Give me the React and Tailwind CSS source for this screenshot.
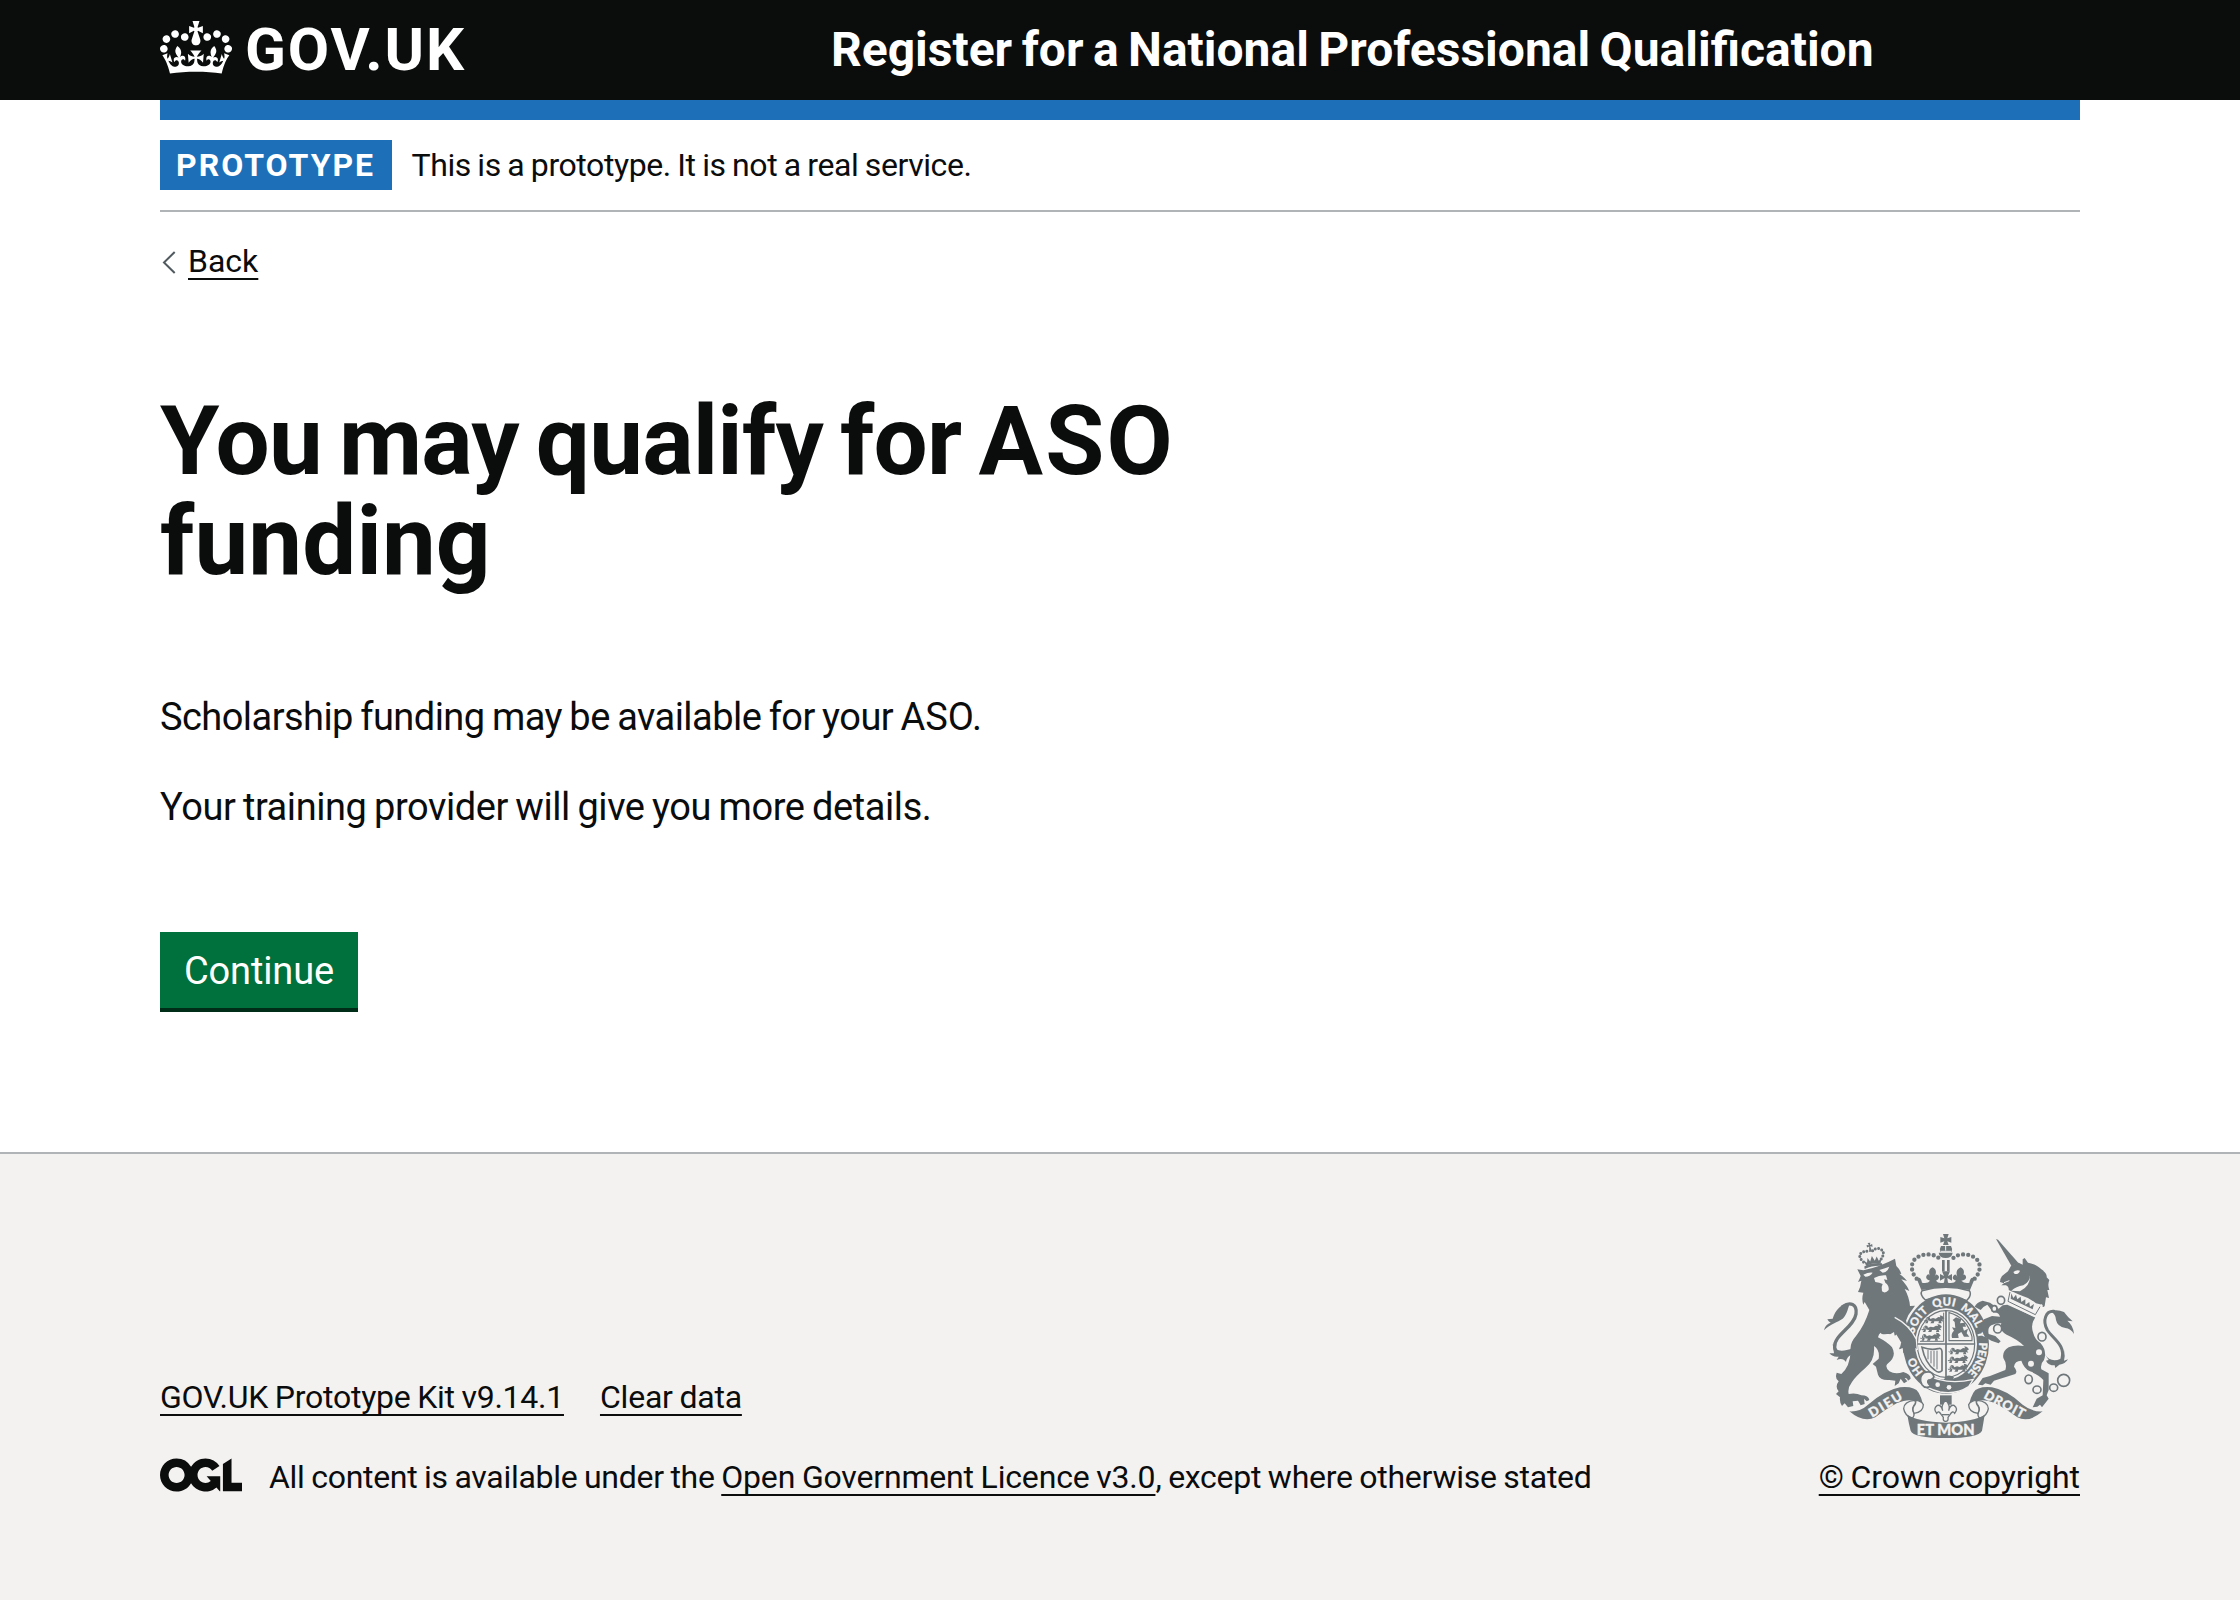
const linkClass =
  "underline decoration-2 underline-offset-[6px] [text-decoration-skip-ink:none]";

function CrownIcon() {
  return (
    <svg viewBox="0 0 132 97" className="mt-px h-[53px] w-[72px] shrink-0" fill="currentColor" aria-hidden="true">
      <path
        fillRule="evenodd"
        d="M25 30.2c3.5 1.5 7.7-.2 9.1-3.7 1.5-3.6-.2-7.8-3.9-9.2-3.6-1.4-7.6.3-9.1 3.9-1.4 3.5.3 7.5 3.9 9zM9 39.5c3.6 1.5 7.8-.2 9.2-3.7 1.5-3.6-.2-7.8-3.9-9.1-3.6-1.5-7.6.2-9.1 3.8-1.4 3.5.3 7.5 3.8 9zM4.4 57.2c3.5 1.5 7.7-.2 9.1-3.8 1.5-3.6-.2-7.7-3.9-9.1-3.5-1.5-7.6.3-9.1 3.8-1.4 3.5.3 7.6 3.9 9.1zm38.3-21.4c3.5 1.5 7.7-.2 9.1-3.8 1.5-3.6-.2-7.7-3.9-9.1-3.6-1.5-7.6.3-9.1 3.8-1.3 3.6.4 7.7 3.9 9.1zm64.4-5.6c-3.6 1.5-7.8-.2-9.1-3.7-1.5-3.6.2-7.8 3.8-9.2 3.6-1.4 7.7.3 9.2 3.9 1.3 3.5-.4 7.5-3.9 9zm15.9 9.3c-3.6 1.5-7.7-.2-9.1-3.7-1.5-3.6.2-7.8 3.7-9.1 3.6-1.5 7.7.2 9.2 3.8 1.5 3.5-.3 7.5-3.8 9zm4.7 17.7c-3.6 1.5-7.8-.2-9.2-3.8-1.5-3.6.2-7.7 3.9-9.1 3.6-1.5 7.7.3 9.2 3.8 1.3 3.5-.4 7.6-3.9 9.1zM89.3 35.8c-3.6 1.5-7.8-.2-9.2-3.8-1.4-3.6.2-7.7 3.9-9.1 3.6-1.5 7.7.3 9.2 3.8 1.4 3.6-.3 7.7-3.9 9.1zM69.7 17.7l8.9 4.7V9.3l-8.9 2.8c-.2-.3-.5-.6-.9-.9L72.4 0H59.6l3.5 11.2c-.3.3-.6.5-.9.9l-8.8-2.8v13.1l8.8-4.7c.3.3.6.7.9.9l-5 15.4v.1c-.2.8-.4 1.6-.4 2.4 0 4.1 3.1 7.5 7 8.1h.2c.3 0 .7.1 1 .1.4 0 .7 0 1-.1h.2c4-.6 7.1-4.1 7.1-8.1 0-.8-.1-1.7-.4-2.4V34l-5.1-15.4c.4-.2.7-.6 1-.9zM66 92.8c16.9 0 32.8 1.1 47.1 3.2 4-16.9 8.9-26.7 14-33.5l-9.6-3.4c1 4.9 1.1 7.2 0 10.2-1.5-1.4-3-4.3-4.2-8.7L108.6 76c2.8-2 5-3.2 7.5-3.3-4.4 9.4-10 11.9-13.6 11.2-4.3-.8-6.3-4.6-5.6-7.9 1-4.7 5.7-5.9 8-.5 4.3-8.7-3-11.4-7.6-8.8 7.1-7.2 7.9-13.5 2.1-21.1-8 6.1-8.1 12.3-4.5 20.8-4.7-5.4-12.1-2.5-9.5 6.2 3.4-5.2 7.9-2 7.2 3.1-.6 4.3-6.4 7.8-13.5 7.2-10.3-.9-10.9-8-11.2-13.8 2.5-.5 7.1 1.8 11 7.3L80.2 60c-4.1 4.4-8 5.3-12.3 5.4 1.4-4.4 8-11.6 8-11.6H55.5s6.4 7.2 7.9 11.6c-4.2-.1-8-1-12.3-5.4l1.4 16.4c3.9-5.5 8.5-7.7 10.9-7.3-.3 5.8-.9 12.8-11.1 13.8-7.2.6-12.9-2.9-13.5-7.2-.7-5 3.8-8.3 7.1-3.1 2.7-8.7-4.6-11.6-9.4-6.2 3.7-8.5 3.6-14.7-4.6-20.8-5.8 7.6-5 13.9 2.2 21.1-4.7-2.6-11.9.1-7.7 8.8 2.3-5.5 7.1-4.2 8.1.5.7 3.3-1.3 7.1-5.7 7.9-3.5.7-9-1.8-13.5-11.2 2.5.1 4.7 1.3 7.5 3.3l-4.7-15.4c-1.2 4.4-2.7 7.2-4.3 8.7-1.1-3-.9-5.3 0-10.2l-9.5 3.4c5 6.9 9.9 16.7 14 33.5 14.8-2.1 30.8-3.2 47.7-3.2z"
      />
    </svg>
  );
}

function OglLogo() {
  return (
    <svg viewBox="0 0 483.2 195.7" className="mt-[10px] h-[34px] w-[82px] shrink-0" fill="currentColor" aria-hidden="true">
      <path d="M421.5 142.8V.1l-50.7 32.3v161.1h112.4v-50.7zm-122.3-9.6A47.12 47.12 0 0 1 221 97.8c0-26 21.1-47.1 47.1-47.1 16.7 0 31.4 8.7 39.7 21.8l42.7-27.2A97.63 97.63 0 0 0 268.1 0c-36.5 0-68.3 20.1-85.1 49.7A98 98 0 0 0 97.8 0C43.9 0 0 43.9 0 97.8s43.9 97.8 97.8 97.8c36.5 0 68.3-20.1 85.1-49.7a97.76 97.76 0 0 0 149.6 25.4l19.4 22.2h3v-87.8h-80l24.3 27.5zM97.8 145c-26 0-47.1-21.1-47.1-47.1s21.1-47.1 47.1-47.1 47.1 21.1 47.1 47.1S123.8 145 97.8 145" />
    </svg>
  );
}

const INK = "#6f777b";
const PAPER = "#f3f2f1";

function MiniLion({ x, y }) {
  return (
    <g transform={`translate(${x} ${y})`}>
      <path
        d="M0 8Q4-2 12 3L14 8L22 5L30 7L38 2L44 3L42-3L50-1L56 6L50 10L54 16L46 14L48 21H38L40 15L26 15L24 21H14L18 15L8 14L6 21H-2L3 14Q-4 18-6 12L0 13z"
        fill={INK}
      />
      <path d="M12 14Q0 12 4 4" fill="none" stroke={PAPER} strokeWidth="1.5" />
    </g>
  );
}

/* Royal coat of arms, drawn in a 750 x 612 space offset by (72, 72). */
function RoyalArms() {
  return (
    <svg viewBox="72 72 750 612" className="h-[204px] w-[250px]" fill={INK} aria-hidden="true">
      <defs>
        <path id="garter" d="M438 517A99 115 0 0 1 438 287A99 115 0 0 1 438 517" />
      </defs>

      {/* lion: tail */}
      <g fill="none" stroke={INK} strokeWidth="10" strokeLinecap="round">
        <path d="M128 290C150 274 172 282 168 312C162 352 100 376 104 412C106 430 122 436 146 426" />
      </g>
      <path d="M72 361C76 346 82 342 92 338C88 336 84 332 82 328L98 326C106 300 124 280 150 280C144 292 142 314 128 326C112 338 92 340 72 361z" />
      <path d="M98 402C108 424 122 428 160 414L162 430C144 438 140 446 138 456C132 448 124 444 110 450L116 440C104 442 96 438 88 430L102 430z" />

      {/* lion: body */}
      <path d="M172 178L190 181Q240 170 285 146L289 168Q300 178 304 192L298 191Q315 204 321 213L304 208Q322 228 328 243L314 237Q328 262 330 288L345 287L336 300Q322 316 318 332L322 345Q338 370 347 398L344 428L334 418L330 434L320 420L312 430L308 412L298 418L302 400Q290 370 262 372Q244 374 242 368Q236 372 234 382Q262 396 276 412Q292 440 262 462Q254 470 268 484Q286 494 310 486Q332 492 332 506L324 512Q322 502 314 504L322 514L312 520L302 506L296 520L284 528L286 512L268 510Q240 512 234 494L228 470L218 462L236 446Q240 420 222 408Q226 450 196 474Q166 500 156 516Q142 534 146 552Q168 548 184 556Q206 556 208 570L200 574L192 566L194 582L182 586L174 572L158 574L160 588L144 592L134 580L126 588Q118 576 120 562L108 552L116 544Q104 530 116 514Q104 508 110 488L124 492Q150 470 152 424Q148 400 168 378Q194 346 208 300L194 276L190 284Q184 266 190 248L174 246Q182 230 184 212L174 216Q180 204 182 198z" />
      <g fill={PAPER}>
        <path d="M190 194Q206 186 218 188Q210 200 196 200zM238 180Q252 176 268 170Q262 188 248 188z" />
        <path d="M222 204Q240 194 258 196L262 210L252 208L256 218Q268 226 266 240Q256 252 246 244Q242 232 248 222L238 218L226 216z" />
        <path d="M240 380L262 378L282 366L284 378L294 370L296 382L304 376L300 388L312 392L302 400L304 414L292 406L280 396L262 394z" />
      </g>
      <g fill={INK} transform="rotate(-10 214 140)">
        <path d="M190 148L194 164Q214 158 238 164L244 148L234 156L230 142L222 154L216 138L208 154L202 142L198 156z" />
        <path d="M210 98h8l-2 7 7-2v8l-7-2 3 16h-9l3-16-7 2v-8l7 2z" />
        <path d="M188 152Q170 128 192 122Q202 118 210 126M242 152Q262 130 240 120Q228 116 218 126" fill="none" stroke={INK} strokeWidth="9" strokeLinecap="round" strokeDasharray="0 10" />
        <path d="M188 165Q214 157 242 165L242 173Q214 166 188 173z" />
      </g>

      {/* royal crown */}
      <path d="M429 72h17l-4 13 12-4v17l-12-4 4 11h-17l4-11-12 4V81l12 4z" />
      <path d="M423 108h30q6 10 2 18h-34q-4-8 2-18z" />
      <path d="M437 108v14M422 124h32" stroke={PAPER} strokeWidth="3" />
      <path d="M416 128h42q-2 16-21 16t-21-16zM426 150h8v34h-8zM441 150h8v34h-8z" />
      <g fill="none" stroke={INK} strokeWidth="13" strokeLinecap="round" strokeDasharray="0 15.5">
        <path d="M350 206C334 190 328 158 350 143C372 128 404 132 416 144" />
        <path d="M524 206C540 190 548 158 524 143C502 128 472 132 460 144" />
      </g>
      <path d="M350 206Q362 196 366 218Q384 222 390 212Q372 206 382 194Q388 190 390 200Q382 178 398 172Q414 180 404 200Q408 188 416 198Q420 208 408 212Q414 222 432 218L434 204L420 212V192L432 198L426 184H450L444 198L456 192V212L442 204L444 218Q462 222 468 212Q454 208 460 198Q466 188 472 200Q464 180 482 172Q498 180 488 200Q490 190 496 196Q504 208 484 212Q494 222 508 218Q512 196 524 206L510 240Q438 228 364 240z" />
      <path d="M366 242Q438 222 508 242Q514 250 508 262L500 272Q438 248 376 270Q358 254 366 242z" fill={PAPER} stroke={INK} strokeWidth="4.5" />

      {/* garter */}
      <ellipse cx="438" cy="402" rx="129" ry="149" />
      <ellipse cx="438" cy="402" rx="93" ry="107" fill={PAPER} />
      <ellipse cx="438" cy="402" rx="86" ry="100" fill={PAPER} stroke={INK} strokeWidth="3.5" />
      <g fill={PAPER} stroke={PAPER} strokeWidth="0.8" className="font-['Lato'] text-[34px] font-black">
        <text><textPath href="#garter" startOffset="76">HO</textPath></text>
        <text><textPath href="#garter" startOffset="198" textLength="82">SOIT</textPath></text>
        <text><textPath href="#garter" startOffset="298" textLength="64">QUI</textPath></text>
        <text><textPath href="#garter" startOffset="380" textLength="76">MAL</textPath></text>
        <text><textPath href="#garter" startOffset="466">Y</textPath></text>
        <text><textPath href="#garter" startOffset="500" textLength="100">PENSE</textPath></text>
      </g>

      {/* lion: forearm across the garter */}
      <path d="M284 320Q328 342 349 388L352 418L342 412L345 430L334 420L329 434L320 422L310 430L308 414L298 418L304 398L286 368L270 340z" />
      <path d="M284 322Q328 344 349 388L352 420" fill="none" stroke={PAPER} strokeWidth="4" />

      {/* shield quarters */}
      <path d="M438 300v204M352 402h172" stroke={INK} strokeWidth="5" />
      <path d="M431 308V394H360" fill="none" stroke={INK} strokeWidth="3" />
      <path d="M447 308V392H516V380Q500 322 447 308z" fill="none" stroke={INK} strokeWidth="3.5" />
      <MiniLion x={377} y={319} />
      <MiniLion x={370} y={345} />
      <MiniLion x={366} y={371} />
      <MiniLion x={451} y={412} />
      <MiniLion x={449} y={438} />
      <MiniLion x={449} y={464} />
      <path d="M456 384Q452 370 462 362L456 352L466 354L464 336L458 330L468 322L484 328L480 340L494 338L498 350L488 350L492 362L504 356L500 370L508 380L492 380L484 366L474 372L476 384z" />
      <path d="M366 412Q394 422 414 416Q424 412 426 424V482Q416 492 404 480Q376 460 366 412z" fill="none" stroke={INK} strokeWidth="5" />
      <path d="M384 420V448M393 422V460M402 422V470M411 422V478" stroke={INK} strokeWidth="3" />
      <path d="M438 498Q452 494 462 502L456 512H430z" />

      {/* buckle and strap */}
      <path d="M374 490Q436 528 520 508L506 530Q470 554 420 546Q380 536 362 516z" stroke={PAPER} strokeWidth="4" />
      <circle cx="413" cy="524" r="7" fill={PAPER} />
      <circle cx="447" cy="532" r="7" fill={PAPER} />
      <path d="M372 488Q396 480 402 500Q398 510 386 510Q378 516 392 528Q376 538 366 524Q354 504 372 488z" fill={PAPER} stroke={INK} strokeWidth="5" />

      {/* fleur-de-lis */}
      <path d="M420 556h35v28h-35z" />
      <path d="M437 570Q452 586 446 602Q450 584 462 586Q476 596 464 610Q458 600 450 614L444 622Q446 634 437 634Q428 634 430 622L424 614Q416 600 410 610Q398 596 412 586Q424 584 428 602Q422 586 437 570z" fill={PAPER} stroke={INK} strokeWidth="4" />
      <path d="M426 614h22" stroke={INK} strokeWidth="4" />

      {/* unicorn: horn, head and mane */}
      <path d="M588 87L594 89L656 160L634 167z" />
      <path d="M634 166L656 158L668 164L668 148L674 144L684 158Q712 164 724 178Q742 190 740 202L748 210Q742 224 748 240L742 240L747 264L738 262L734 288Q728 296 726 284L708 280Q690 264 668 258Q640 246 626 240Q628 230 618 226L604 226L612 220L600 216Q600 206 606 198L624 184Z" />
      <path d="M640 186Q650 178 660 182Q656 194 644 192zM690 196Q690 216 670 226Q648 230 634 242L660 244Q692 228 690 196z" fill={PAPER} />
      <path d="M612 218L628 212" stroke={PAPER} strokeWidth="3" />

      {/* unicorn: body and legs */}
      <path d="M622 284L706 322Q690 344 700 370Q704 388 722 400Q742 424 732 450Q720 462 724 478L746 490V540L740 556L746 566L726 592L720 584L712 590L698 592L710 566L728 556L730 510Q716 494 690 484Q672 476 664 452Q644 452 642 470Q654 484 646 492L582 512L572 524L556 520L548 526L534 524L548 504L570 498L616 480Q622 462 610 444Q606 424 626 412Q644 404 672 408Q656 390 620 374Q596 362 604 340Q590 338 574 346Q562 352 566 372L586 378L602 394L596 400L574 392L554 380Q536 350 552 328L576 318L600 320Q596 306 580 308L562 284Q548 290 542 300L524 290Q530 276 548 272L570 278L596 296L608 286z" />

      {/* unicorn: collar */}
      <path d="M630 244L724 290L708 320L622 276z" fill={PAPER} />
      <path d="M622 278L708 321L726 284" fill="none" stroke={PAPER} strokeWidth="5" />
      <path d="M630 246L624 274L706 314L720 290" fill="none" stroke={INK} strokeWidth="3" />
      <path d="M634 250l6 14 8-10 4 14 10-8 2 16 12-8 0 16 12-8 2 14 12-8-4 16-66-32z" />

      <g fill={PAPER} stroke={INK} strokeWidth="5">
        <ellipse cx="603" cy="271" rx="11" ry="12" />
        <ellipse cx="583" cy="296" rx="8" ry="9" />
        <ellipse cx="593" cy="356" rx="12" ry="13" />
        <ellipse cx="726" cy="380" rx="12" ry="13" />
        <ellipse cx="686" cy="508" rx="11" ry="13" />
        <ellipse cx="711" cy="539" rx="12" ry="11" />
        <ellipse cx="761" cy="533" rx="12" ry="11" />
        <circle cx="791" cy="511" r="18" />
      </g>
      <circle cx="717" cy="427" r="9" fill={PAPER} />
      <circle cx="693" cy="461" r="9" fill={PAPER} />

      {/* unicorn: tail */}
      <path d="M762 304C738 302 726 330 742 360C760 388 796 404 786 446" fill="none" stroke={INK} strokeWidth="9" strokeLinecap="round" />
      <path d="M752 304Q770 296 792 306Q802 320 818 334L802 332Q820 346 822 372Q812 356 796 354Q772 350 768 330Q768 314 752 304z" />
      <path d="M734 432Q752 460 782 446L792 420Q796 438 792 452L804 448Q796 462 778 464L766 474L764 466Q744 466 738 452L746 450z" />

      {/* motto ribbon */}
      <path d="M148 604Q180 606 204 584Q256 540 300 532Q344 528 356 548Q366 566 368 580L338 572Q320 568 290 580Q256 598 226 622Q190 640 148 604z" />
      <path d="M728 604Q696 606 668 584Q620 540 576 532Q532 528 520 548Q510 566 508 580L538 572Q556 568 586 580Q620 598 652 622Q686 640 728 604z" />
      <g fill={PAPER} stroke={INK} strokeWidth="4">
        <path d="M344 571Q312 574 311 596Q314 616 336 626Q344 618 342 608Q334 596 342 586Q350 578 344 571z" />
        <path d="M342 610Q370 606 370 584Q364 572 346 571Q350 578 342 588Q336 598 342 610z" />
        <path d="M532 571Q564 574 565 596Q562 616 540 626Q532 618 534 608Q542 596 534 586Q526 578 532 571z" />
        <path d="M534 610Q506 606 506 584Q512 572 530 571Q526 578 534 588Q540 598 534 610z" />
      </g>
      <path d="M322 614Q350 634 438 638Q526 634 554 614Q550 640 546 662Q536 684 438 684Q340 684 332 662Q326 640 322 614z" />
      <g fill={PAPER} stroke={PAPER} strokeWidth="1" className="font-['Lato'] text-[39px] font-black">
        <text transform="translate(216 623) rotate(-31)" textLength="110">DIEU</text>
        <text transform="translate(350 675)" textLength="174" className="text-[44px]">ET MON</text>
        <text transform="translate(549 563) rotate(28)" textLength="133">DROIT</text>
      </g>
    </svg>
  );
}

export default function App() {
  return (
    <div className="flex h-[1600px] w-[2240px] flex-col bg-white font-['Roboto',sans-serif] text-[#0b0c0c]">
      <header className="h-[100px] shrink-0 bg-[#0b0c0c] px-[160px] text-white">
        <div className="flex">
          <a className="flex w-[671px] pt-5">
            <CrownIcon />
            <span className="ml-[13px] text-[60px] leading-[60px] font-bold tracking-[1.9px]">GOV.UK</span>
          </a>
          <a className="pt-5 text-[48px] leading-[60px] font-bold whitespace-nowrap [word-spacing:-2.5px]">
            Register for a National Professional Qualification
          </a>
        </div>
      </header>

      <div className="mx-[160px] flex flex-col">
        <div className="h-5 bg-[#1d70b8]" />
        <div className="flex h-[92px] items-start border-b-2 border-[#b1b4b6] pt-5">
          <strong className="h-[50px] w-[232px] bg-[#1d70b8] px-4 pt-[5px] text-[32px] leading-10 font-bold tracking-[2px] text-white">
            PROTOTYPE
          </strong>
          <span className="mt-[5px] ml-[19.5px] text-[32px] leading-10 tracking-[-0.42px] [word-spacing:-1px]">
            This is a prototype. It is not a real service.
          </span>
        </div>

        <div className="mt-[29px] flex h-10 items-start">
          <svg viewBox="0 0 14 23" className="mt-[10px] ml-[2px] h-[23px] w-[14px]" fill="none" stroke="#505a5f" strokeWidth="2">
            <path d="M12.7 1 2 11.5 12.7 22" />
          </svg>
          <a className={`ml-3 text-[32px] leading-10 ${linkClass}`}>Back</a>
        </div>

        <main className="flex w-[1250px] flex-col items-start pt-[110px]">
          <h1 className="text-[96px] leading-[100px] font-bold tracking-[-0.8px] [word-spacing:-6px]">
            You may qualify for <span className="tracking-[2.2px]">ASO</span>
            <br />
            <span className="tracking-[0.1px]">funding</span>
          </h1>
          <p className="mt-[101px] text-[38px] leading-[50px] tracking-[-0.55px] [word-spacing:-1.5px]">
            Scholarship funding may be available for your <span className="tracking-normal">ASO.</span>
          </p>
          <p className="mt-10 text-[38px] leading-[50px] tracking-[-0.43px] [word-spacing:-1.5px]">
            Your training provider will give you more details.
          </p>
          <button className="mt-[100px] h-20 w-[198px] border-b-4 border-[#002d18] bg-[#00703c] text-[38px] leading-[76px] tracking-[-0.13px] text-white">
            <span className="block pt-[1px]">Continue</span>
          </button>
        </main>
      </div>

      <footer className="mt-[140px] flex grow items-end justify-between border-t-2 border-[#b1b4b6] bg-[#f3f2f1] px-[160px] pb-[103px] text-[32px] leading-10">
        <div className="flex flex-col">
          <div className="flex gap-[36px]">
            <a className={`tracking-[-0.25px] [word-spacing:-1px] ${linkClass}`}>GOV.UK Prototype Kit v9.14.1</a>
            <a className={`tracking-[-0.22px] [word-spacing:-1px] ${linkClass}`}>Clear data</a>
          </div>
          <div className="mt-[30px] flex items-start pt-[10px]">
            <div className="-mt-[9px] flex">
              <OglLogo />
            </div>
            <p className="ml-[27px] whitespace-pre [word-spacing:-1px]">
              <span className="tracking-[-0.29px]">{"All content is available under the "}</span>
              <a className={`tracking-[-0.18px] ${linkClass}`}>Open Government Licence v3.0</a>
              <span className="tracking-[-0.27px]">, except where otherwise stated</span>
            </p>
          </div>
        </div>
        <div className="flex flex-col items-end">
          <div className="mr-[6px]">
            <RoyalArms />
          </div>
          <a className={`mt-[19px] tracking-[-0.1px] [word-spacing:-1px] ${linkClass}`}>© Crown copyright</a>
        </div>
      </footer>
    </div>
  );
}
